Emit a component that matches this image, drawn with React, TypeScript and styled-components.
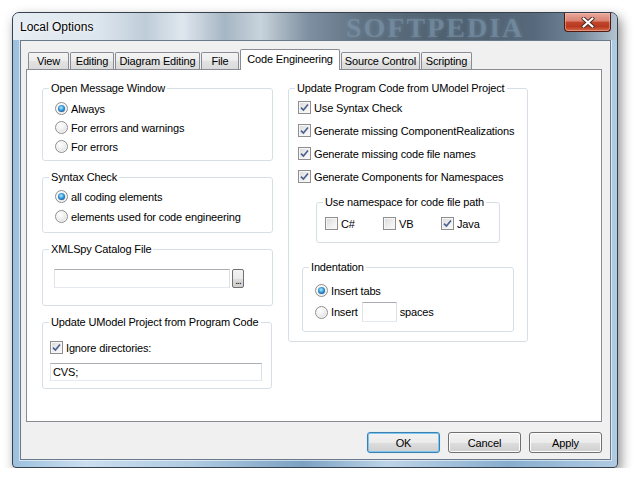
import React from 'react';
import styled, { createGlobalStyle } from 'styled-components';

const GlobalStyle = createGlobalStyle`
  html, body {
    margin: 0;
    padding: 0;
    background: #fff;
  }
  body {
    font-family: "Liberation Sans", Arial, sans-serif;
    font-size: 11px;
    letter-spacing: -0.15px;
    color: #000;
  }
`;

const Page = styled.div`
  padding: 12px 0 0 12px;
`;

const Window = styled.div`
  position: relative;
  width: 606px;
  height: 456px;
  box-sizing: border-box;
  border: 1px solid #36414d;
  border-radius: 7px 7px 4px 4px;
  background: linear-gradient(90deg, #9cc0de 0%, #cadeee 12%, #afcae1 30%, #7ba1c2 48%, #bdd4e7 62%, #87adce 82%, #b0cbe2 100%);
  box-shadow: 3px 5px 12px rgba(0, 0, 0, 0.45);
  display: flex;
  flex-direction: column;
  overflow: hidden;
`;

const TitleBar = styled.div`
  position: relative;
  height: 27px;
  flex: none;
  display: flex;
  align-items: center;
  padding-left: 7px;
  background: linear-gradient(90deg, #e6edf3 0%, #dde6ee 14%, #bfcdd9 22%, #dfe7ee 28%, #a6b6c4 35%, #c8d3dc 41%, #7d8fa0 49%, #5f7181 58%, #4f606f 72%, #56687a 86%, #6f8498 93%, #b3c3d0 100%);
`;

const Title = styled.span`
  position: relative;
  z-index: 1;
  font-size: 12px;
  letter-spacing: 0;
  color: #000;
  text-shadow: 0 0 6px rgba(255, 255, 255, 0.95), 0 0 2px rgba(255, 255, 255, 0.9);
`;

const Watermark = styled.span`
  position: absolute;
  left: 333px;
  top: 0;
  height: 27px;
  line-height: 29px;
  font-family: "Liberation Serif", serif;
  font-weight: bold;
  font-size: 28px;
  letter-spacing: 2px;
  color: rgba(135, 160, 182, 0.45);
  text-shadow: 0 0 4px rgba(110, 135, 156, 0.7);
  pointer-events: none;
`;

const CloseButton = styled.div`
  position: relative;
  z-index: 1;
  margin-left: auto;
  margin-right: 6px;
  align-self: flex-start;
  width: 47px;
  height: 19px;
  box-sizing: border-box;
  border: 1px solid #4d1a12;
  border-top: none;
  border-radius: 0 0 4px 4px;
  background: linear-gradient(180deg, #e9a99b 0%, #d98271 45%, #c2452c 50%, #b8391f 75%, #d36a48 100%);
  box-shadow: inset 0 0 0 1px rgba(255, 200, 190, 0.45);
  display: flex;
  align-items: center;
  justify-content: center;
`;

const Client = styled.div`
  flex: 1;
  margin: 0 6px 7px 7px;
  box-sizing: border-box;
  background: #f0f0f0;
  border: 1px solid #687a8c;
  box-shadow: 0 0 0 1px rgba(255, 255, 255, 0.55);
  display: flex;
  flex-direction: column;
  padding: 8px 8px 6px 5px;
`;

const TabStrip = styled.div`
  display: flex;
  align-items: flex-end;
  gap: 1px;
  padding-left: 2px;
  margin-bottom: -1px;
  position: relative;
  z-index: 1;
`;

const Tab = styled.div<{ $w: number; $active?: boolean }>`
  width: ${p => p.$w}px;
  height: ${p => (p.$active ? 21 : 17)}px;
  margin-bottom: ${p => (p.$active ? 0 : 1)}px;
  box-sizing: border-box;
  border: 1px solid #898c95;
  border-bottom: none;
  border-radius: 2px 2px 0 0;
  background: ${p => (p.$active ? '#fff' : 'linear-gradient(180deg, #f4f4f4 0%, #ececec 50%, #e2e2e2 51%, #dadada 100%)')};
  display: flex;
  align-items: center;
  justify-content: center;
  padding-bottom: ${p => (p.$active ? 3 : 0)}px;
  white-space: nowrap;
`;

const Panel = styled.div`
  height: 353px;
  box-sizing: border-box;
  border: 1px solid #898c95;
  background: #fff;
  display: flex;
  align-items: flex-start;
  gap: 15px;
  padding: 12px 0 0 15px;
`;

const Column = styled.div<{ $w: number }>`
  width: ${p => p.$w}px;
  display: flex;
  flex-direction: column;
  gap: 10px;
`;

const Group = styled.fieldset<{ $w?: number; $ml?: number; $mt?: number }>`
  width: ${p => (p.$w ? `${p.$w}px` : 'auto')};
  margin: ${p => p.$mt ?? 0}px 0 0 ${p => p.$ml ?? 0}px;
  padding: 0;
  box-sizing: border-box;
  border: 1px solid #d5dfe5;
  border-radius: 3px;
  min-inline-size: 0;
`;

const Legend = styled.legend`
  margin-left: 6px;
  padding: 0 2px;
  line-height: 13px;
  font-size: 11px;
`;

const GroupBody = styled.div<{ $pad: string; $gap?: number }>`
  display: flex;
  flex-direction: column;
  gap: ${p => p.$gap ?? 0}px;
  padding: ${p => p.$pad};
`;

const Option = styled.div<{ $h?: number }>`
  display: flex;
  align-items: center;
  height: ${p => p.$h ?? 19}px;
  white-space: nowrap;
`;

const Radio = styled.span<{ $on?: boolean }>`
  position: relative;
  flex: none;
  width: 13px;
  height: 13px;
  box-sizing: border-box;
  margin-right: 3px;
  border-radius: 50%;
  border: 1px solid #8c8e91;
  background: radial-gradient(circle at 40% 35%, #ffffff 0%, #eeeeee 45%, #d2d2d2 100%);
  box-shadow: inset 0 0 0 1px rgba(255, 255, 255, 0.7);

  &::after {
    content: '';
    display: ${p => (p.$on ? 'block' : 'none')};
    position: absolute;
    left: 2px;
    top: 2px;
    width: 7px;
    height: 7px;
    border-radius: 50%;
    background: radial-gradient(circle at 45% 40%, #b9ecff 0%, #3fa2df 40%, #145b98 75%, #0c3f72 100%);
  }
`;

const Box = styled.span`
  flex: none;
  width: 13px;
  height: 13px;
  box-sizing: border-box;
  margin-right: 3px;
  border: 1px solid #8f8f8f;
  background: linear-gradient(135deg, #d9d9d9 0%, #eeeeee 55%, #fbfbfb 100%);
  box-shadow: inset 0 0 0 1px #f6f6f6;
  display: flex;
  align-items: center;
  justify-content: center;
`;

const Field = styled.input<{ $w: number; $h: number }>`
  width: ${p => p.$w}px;
  height: ${p => p.$h}px;
  box-sizing: border-box;
  margin: 0;
  padding: 0 2px;
  border: 1px solid;
  border-color: #abadb3 #dbdfe6 #e3e9ef #e2e3ea;
  border-radius: 0;
  background: #fff;
  font-family: "Liberation Sans", Arial, sans-serif;
  font-size: 11px;
  letter-spacing: -0.15px;
  color: #000;
  outline: none;
`;

const FieldRow = styled.div`
  display: flex;
  align-items: center;
  gap: 2px;
`;

const BrowseButton = styled.div`
  width: 12px;
  height: 19px;
  box-sizing: border-box;
  border: 1px solid #707070;
  border-radius: 2px;
  background: linear-gradient(180deg, #f2f2f2 0%, #ebebeb 50%, #dddddd 51%, #cfcfcf 100%);
  display: flex;
  align-items: flex-end;
  justify-content: center;
  font-size: 10px;
  line-height: 12px;
  letter-spacing: -1px;
`;

const NsRow = styled.div`
  display: flex;
  align-items: center;
  height: 19px;
`;

const NsItem = styled.div`
  width: 58px;
  display: flex;
  align-items: center;
`;

const SpacesField = styled(Field)`
  margin: 0 3px 0 4px;
`;

const ButtonRow = styled.div`
  display: flex;
  justify-content: flex-end;
  gap: 8px;
  margin-top: 10px;
`;

const Button = styled.div<{ $default?: boolean }>`
  width: 73px;
  height: 21px;
  box-sizing: border-box;
  border: 1px solid ${p => (p.$default ? '#3c7fb1' : '#707070')};
  border-radius: 3px;
  background: linear-gradient(180deg, #f2f2f2 0%, #ebebeb 50%, #dddddd 51%, #cfcfcf 100%);
  box-shadow: ${p => (p.$default ? 'inset 0 0 0 1px #7dc6ef, 0 0 1px #9fd7f5' : 'inset 0 0 0 1px #fcfcfc')};
  display: flex;
  align-items: center;
  justify-content: center;
  font-size: 11px;
`;

const Check = () => (
  <svg width="9" height="9" viewBox="0 0 9 9">
    <path d="M1 4.6 L3.4 7 L8 1.4" fill="none" stroke="#4a5f8f" strokeWidth="1.6" strokeLinejoin="miter" />
  </svg>
);

const CloseGlyph = () => (
  <svg width="14" height="11" viewBox="0 0 14 11">
    <path d="M2.5 1.5 L11.5 9.5 M11.5 1.5 L2.5 9.5" stroke="#4a2a26" strokeWidth="4" strokeLinecap="round" />
    <path d="M2.5 1.5 L11.5 9.5 M11.5 1.5 L2.5 9.5" stroke="#ffffff" strokeWidth="2.2" strokeLinecap="round" />
  </svg>
);

const RadioOption: React.FC<{ on?: boolean; label: string }> = ({ on, label }) => (
  <Option>
    <Radio $on={on} />
    {label}
  </Option>
);

const CheckOption: React.FC<{ on?: boolean; label: string }> = ({ on, label }) => (
  <Option>
    <Box>{on ? <Check /> : null}</Box>
    {label}
  </Option>
);

const tabs = [
  { label: 'View', width: 41 },
  { label: 'Editing', width: 44 },
  { label: 'Diagram Editing', width: 85 },
  { label: 'File', width: 38 },
  { label: 'Code Engineering', width: 100, active: true },
  { label: 'Source Control', width: 79 },
  { label: 'Scripting', width: 51 },
];

const App: React.FC = () => {
  return (
    <Page>
      <GlobalStyle />
      <Window>
        <TitleBar>
          <Watermark>SOFTPEDIA</Watermark>
          <Title>Local Options</Title>
          <CloseButton>
            <CloseGlyph />
          </CloseButton>
        </TitleBar>
        <Client>
          <TabStrip>
            {tabs.map(t => (
              <Tab key={t.label} $w={t.width} $active={t.active}>
                {t.label}
              </Tab>
            ))}
          </TabStrip>
          <Panel>
            <Column $w={231}>
              <Group>
                <Legend>Open Message Window</Legend>
                <GroupBody $pad="4px 0 4px 12px">
                  <RadioOption on label="Always" />
                  <RadioOption label="For errors and warnings" />
                  <RadioOption label="For errors" />
                </GroupBody>
              </Group>
              <Group>
                <Legend>Syntax Check</Legend>
                <GroupBody $pad="3px 0 6px 12px" $gap={1}>
                  <RadioOption on label="all coding elements" />
                  <RadioOption label="elements used for code engineering" />
                </GroupBody>
              </Group>
              <Group>
                <Legend>XMLSpy Catalog File</Legend>
                <GroupBody $pad="13px 0 17px 11px">
                  <FieldRow>
                    <Field $w={176} $h={19} readOnly value="" />
                    <BrowseButton>...</BrowseButton>
                  </FieldRow>
                </GroupBody>
              </Group>
              <Group $w={230}>
                <Legend>Update UModel Project from Program Code</Legend>
                <GroupBody $pad="9px 0 7px 7px" $gap={6}>
                  <CheckOption on label="Ignore directories:" />
                  <Field $w={212} $h={18} readOnly value="CVS;" />
                </GroupBody>
              </Group>
            </Column>
            <Column $w={240}>
              <Group>
                <Legend>Update Program Code from UModel Project</Legend>
                <GroupBody $pad="3px 0 9px 9px" $gap={4}>
                  <CheckOption on label="Use Syntax Check" />
                  <CheckOption on label="Generate missing ComponentRealizations" />
                  <CheckOption on label="Generate missing code file names" />
                  <CheckOption on label="Generate Components for Namespaces" />
                  <Group $w={184} $ml={18} $mt={6}>
                    <Legend>Use namespace for code file path</Legend>
                    <GroupBody $pad="5px 0 9px 8px">
                      <NsRow>
                        <NsItem>
                          <Box />
                          C#
                        </NsItem>
                        <NsItem>
                          <Box />
                          VB
                        </NsItem>
                        <NsItem>
                          <Box>
                            <Check />
                          </Box>
                          Java
                        </NsItem>
                      </NsRow>
                    </GroupBody>
                  </Group>
                  <Group $w={212} $ml={4} $mt={14}>
                    <Legend>Indentation</Legend>
                    <GroupBody $pad="7px 0 9px 12px" $gap={2}>
                      <RadioOption on label="Insert tabs" />
                      <Option $h={20}>
                        <Radio />
                        Insert
                        <SpacesField $w={35} $h={20} readOnly value="" />
                        spaces
                      </Option>
                    </GroupBody>
                  </Group>
                </GroupBody>
              </Group>
            </Column>
          </Panel>
          <ButtonRow>
            <Button $default>OK</Button>
            <Button>Cancel</Button>
            <Button>Apply</Button>
          </ButtonRow>
        </Client>
      </Window>
    </Page>
  );
};

export default App;
